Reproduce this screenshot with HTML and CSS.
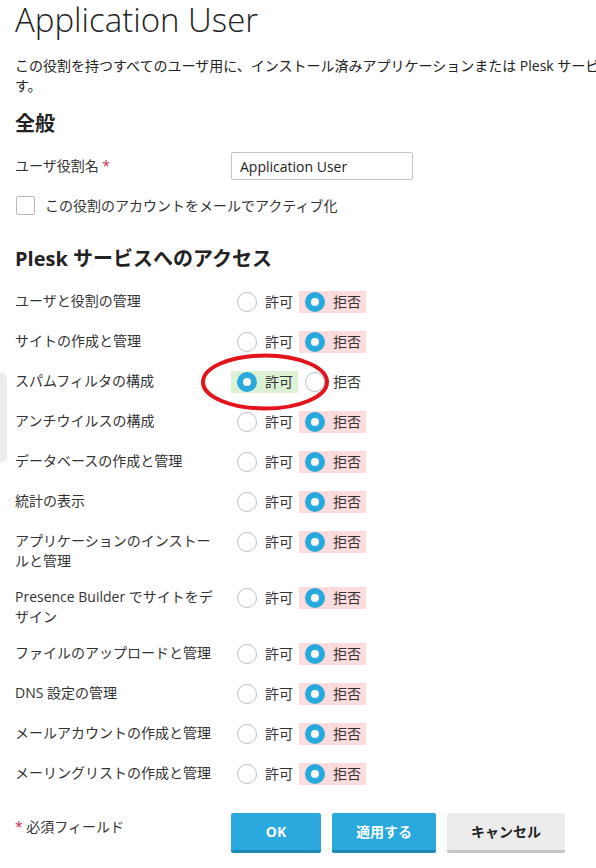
FILE: index.html
```html
<!DOCTYPE html>
<html lang="ja">
<head>
<meta charset="utf-8">
<title>Application User</title>
<link rel="stylesheet" href="styles.css">
</head>
<body>
<div class="side-tab"></div>
<div class="page">
  <h1 class="title">Application User</h1>
  <p class="desc"><span class="nowrap">この役割を持つすべてのユーザ用に、インストール済みアプリケーションまたは Plesk サービスへのアクセスを許可または拒否しま</span><br>す。</p>

  <h2 class="section">全般</h2>
  <div class="field">
    <div class="field-label">ユーザ役割名 <span class="req">*</span></div>
    <input class="text-input" type="text" value="Application User">
  </div>
  <div class="check-row"><span class="checkbox"></span><span>この役割のアカウントをメールでアクティブ化</span></div>

  <h2 class="section section-access">Plesk サービスへのアクセス</h2>
  <div class="perm-list">
    <div class="perm-row"><div class="perm-label">ユーザと役割の管理</div><div class="perm-opts"><span class="opt"><span class="radio"></span>許可</span><span class="opt deny"><span class="radio on"></span>拒否</span></div></div>
    <div class="perm-row"><div class="perm-label">サイトの作成と管理</div><div class="perm-opts"><span class="opt"><span class="radio"></span>許可</span><span class="opt deny"><span class="radio on"></span>拒否</span></div></div>
    <div class="perm-row"><div class="perm-label">スパムフィルタの構成</div><div class="perm-opts"><span class="opt allow"><span class="radio on"></span>許可</span><span class="opt"><span class="radio"></span>拒否</span></div></div>
    <div class="perm-row"><div class="perm-label">アンチウイルスの構成</div><div class="perm-opts"><span class="opt"><span class="radio"></span>許可</span><span class="opt deny"><span class="radio on"></span>拒否</span></div></div>
    <div class="perm-row"><div class="perm-label">データベースの作成と管理</div><div class="perm-opts"><span class="opt"><span class="radio"></span>許可</span><span class="opt deny"><span class="radio on"></span>拒否</span></div></div>
    <div class="perm-row"><div class="perm-label">統計の表示</div><div class="perm-opts"><span class="opt"><span class="radio"></span>許可</span><span class="opt deny"><span class="radio on"></span>拒否</span></div></div>
    <div class="perm-row"><div class="perm-label">アプリケーションのインストールと管理</div><div class="perm-opts"><span class="opt"><span class="radio"></span>許可</span><span class="opt deny"><span class="radio on"></span>拒否</span></div></div>
    <div class="perm-row"><div class="perm-label">Presence Builder でサイトをデザイン</div><div class="perm-opts"><span class="opt"><span class="radio"></span>許可</span><span class="opt deny"><span class="radio on"></span>拒否</span></div></div>
    <div class="perm-row"><div class="perm-label">ファイルのアップロードと管理</div><div class="perm-opts"><span class="opt"><span class="radio"></span>許可</span><span class="opt deny"><span class="radio on"></span>拒否</span></div></div>
    <div class="perm-row"><div class="perm-label">DNS 設定の管理</div><div class="perm-opts"><span class="opt"><span class="radio"></span>許可</span><span class="opt deny"><span class="radio on"></span>拒否</span></div></div>
    <div class="perm-row"><div class="perm-label">メールアカウントの作成と管理</div><div class="perm-opts"><span class="opt"><span class="radio"></span>許可</span><span class="opt deny"><span class="radio on"></span>拒否</span></div></div>
    <div class="perm-row"><div class="perm-label">メーリングリストの作成と管理</div><div class="perm-opts"><span class="opt"><span class="radio"></span>許可</span><span class="opt deny"><span class="radio on"></span>拒否</span></div></div>
  </div>

  <div class="footer">
    <div class="footer-note"><span class="req">*</span> 必須フィールド</div>
    <div class="buttons">
      <button class="btn btn-primary btn-ok">OK</button>
      <button class="btn btn-primary">適用する</button>
      <button class="btn btn-default">キャンセル</button>
    </div>
  </div>

  <svg class="annotation" width="136" height="64" viewBox="0 0 136 64" aria-hidden="true">
    <ellipse cx="67" cy="31" rx="62" ry="26.5" fill="none" stroke="#e3141c" stroke-width="4"/>
  </svg>
</div>
</body>
</html>
```

FILE: styles.css
```css
html, body {
  margin: 0;
  padding: 0;
  overflow: hidden;
  background: #ffffff;
}

body {
  font-family: "Open Sans", "Noto Sans CJK JP", sans-serif;
  font-size: 14px;
  line-height: 20px;
  color: #222222;
}

.page {
  position: relative;
  padding: 0 15px;
}

.side-tab {
  position: absolute;
  left: 0;
  top: 373px;
  width: 7px;
  height: 89px;
  background: #ececec;
  border-radius: 0 5px 5px 0;
}

.title {
  margin: 0;
  font-size: 33px;
  line-height: 40px;
  font-weight: 300;
  color: #222222;
}

.desc {
  margin: 16px 0 0;
  line-height: 20px;
  color: #222222;
}

.nowrap {
  white-space: nowrap;
}

.section {
  margin: 16px 0 0;
  font-size: 20px;
  line-height: 24px;
  font-weight: 700;
  color: #222222;
}

.section-access {
  margin-top: 32px;
}

.field {
  display: flex;
  align-items: center;
  margin-top: 16px;
  height: 28px;
}

.field-label {
  width: 216px;
  flex: none;
  color: #333333;
}

.req {
  color: #d31f4f;
}

.text-input {
  box-sizing: border-box;
  width: 182px;
  height: 28px;
  margin: 0;
  padding: 0 8px;
  border: 1px solid #c4c4c4;
  border-radius: 2px;
  font-family: "Open Sans", "Noto Sans CJK JP", sans-serif;
  font-size: 14px;
  color: #222222;
  background: #ffffff;
}

.check-row {
  display: flex;
  align-items: center;
  gap: 10px;
  margin-top: 16px;
  height: 19px;
  color: #333333;
}

.checkbox {
  box-sizing: border-box;
  width: 19px;
  height: 19px;
  margin-left: 1px;
  border: 1px solid #b9b9b9;
  border-radius: 2px;
  background: #ffffff;
}

.perm-list {
  margin-top: 11px;
}

.perm-row {
  display: flex;
  align-items: flex-start;
  padding: 8px 0 7px;
}

.perm-label {
  width: 209px;
  flex: none;
  padding: 1px 7px 0 0;
  line-height: 20px;
  color: #333333;
}

.perm-opts {
  display: flex;
  align-items: center;
  gap: 1px;
  padding: 1px 0 2px;
}

.opt {
  display: inline-flex;
  align-items: center;
  gap: 8px;
  height: 22px;
  padding: 0 5px 0 6px;
  color: #333333;
}

.opt.allow {
  background: #dcf2d4;
}

.opt.deny {
  background: #fddcdd;
}

.radio {
  box-sizing: border-box;
  width: 20px;
  height: 20px;
  border-radius: 50%;
  border: 1px solid #bdbdbd;
  background: #ffffff;
}

.radio.on {
  border: 6px solid #28a9df;
}

.footer {
  display: flex;
  align-items: flex-start;
  margin-top: 19px;
}

.footer-note {
  width: 216px;
  flex: none;
  padding-top: 4px;
  color: #333333;
}

.buttons {
  display: flex;
  gap: 11px;
}

.btn {
  box-sizing: border-box;
  height: 40px;
  min-width: 90px;
  padding: 0 24px;
  border: none;
  border-radius: 2px;
  font-family: "Open Sans", "Noto Sans CJK JP", sans-serif;
  font-size: 14px;
  font-weight: 700;
  line-height: 20px;
}

.btn-primary {
  background: #29a9dd;
  border-bottom: 3px solid #1f88b6;
  color: #ffffff;
}

.btn-default {
  background: #ececec;
  border-bottom: 3px solid #c6c6c6;
  color: #222222;
}

.annotation {
  position: absolute;
  left: 198px;
  top: 351px;
}
```
